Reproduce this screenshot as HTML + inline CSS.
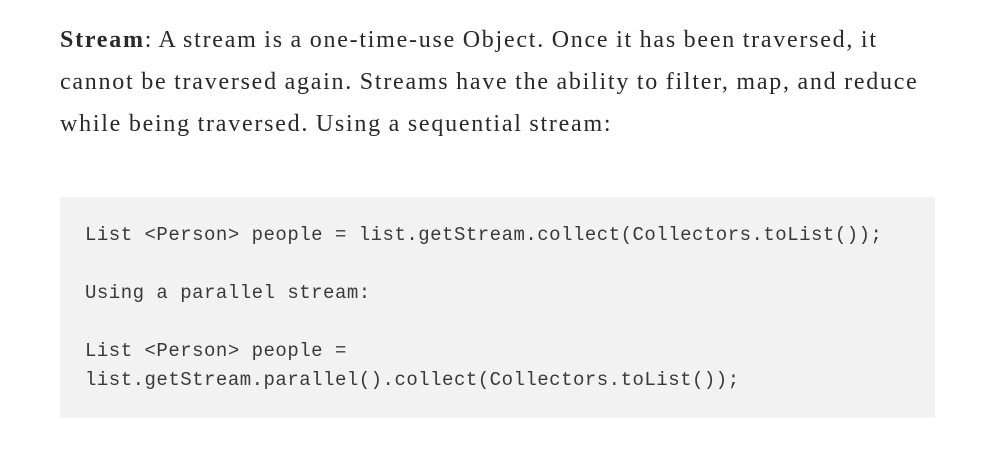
<!DOCTYPE html>
<html><head><style>
html,body{margin:0;padding:0;background:#fff;width:997px;height:463px;overflow:hidden}
p{position:absolute;left:60px;top:19px;margin:0;font:24px/42px "Liberation Serif",serif;color:#292929;letter-spacing:1.75px;word-spacing:-1px;white-space:nowrap}
.code{position:absolute;left:60px;top:197px;width:875px;height:221px;background:#f2f2f2}
pre{margin:0;position:absolute;left:85px;top:221px;font:19px/29px "Liberation Mono",monospace;letter-spacing:0.5px;color:#3a3a3a}
</style></head><body>
<p><b>Stream</b>: A stream is a one-time-use Object. Once it has been traversed, it<br>cannot be traversed again. Streams have the ability to filter, map, and reduce<br>while being traversed. Using a sequential stream:</p>
<div class="code"></div>
<pre>List &lt;Person&gt; people = list.getStream.collect(Collectors.toList());

Using a parallel stream:

List &lt;Person&gt; people =
list.getStream.parallel().collect(Collectors.toList());</pre>
</body></html>
